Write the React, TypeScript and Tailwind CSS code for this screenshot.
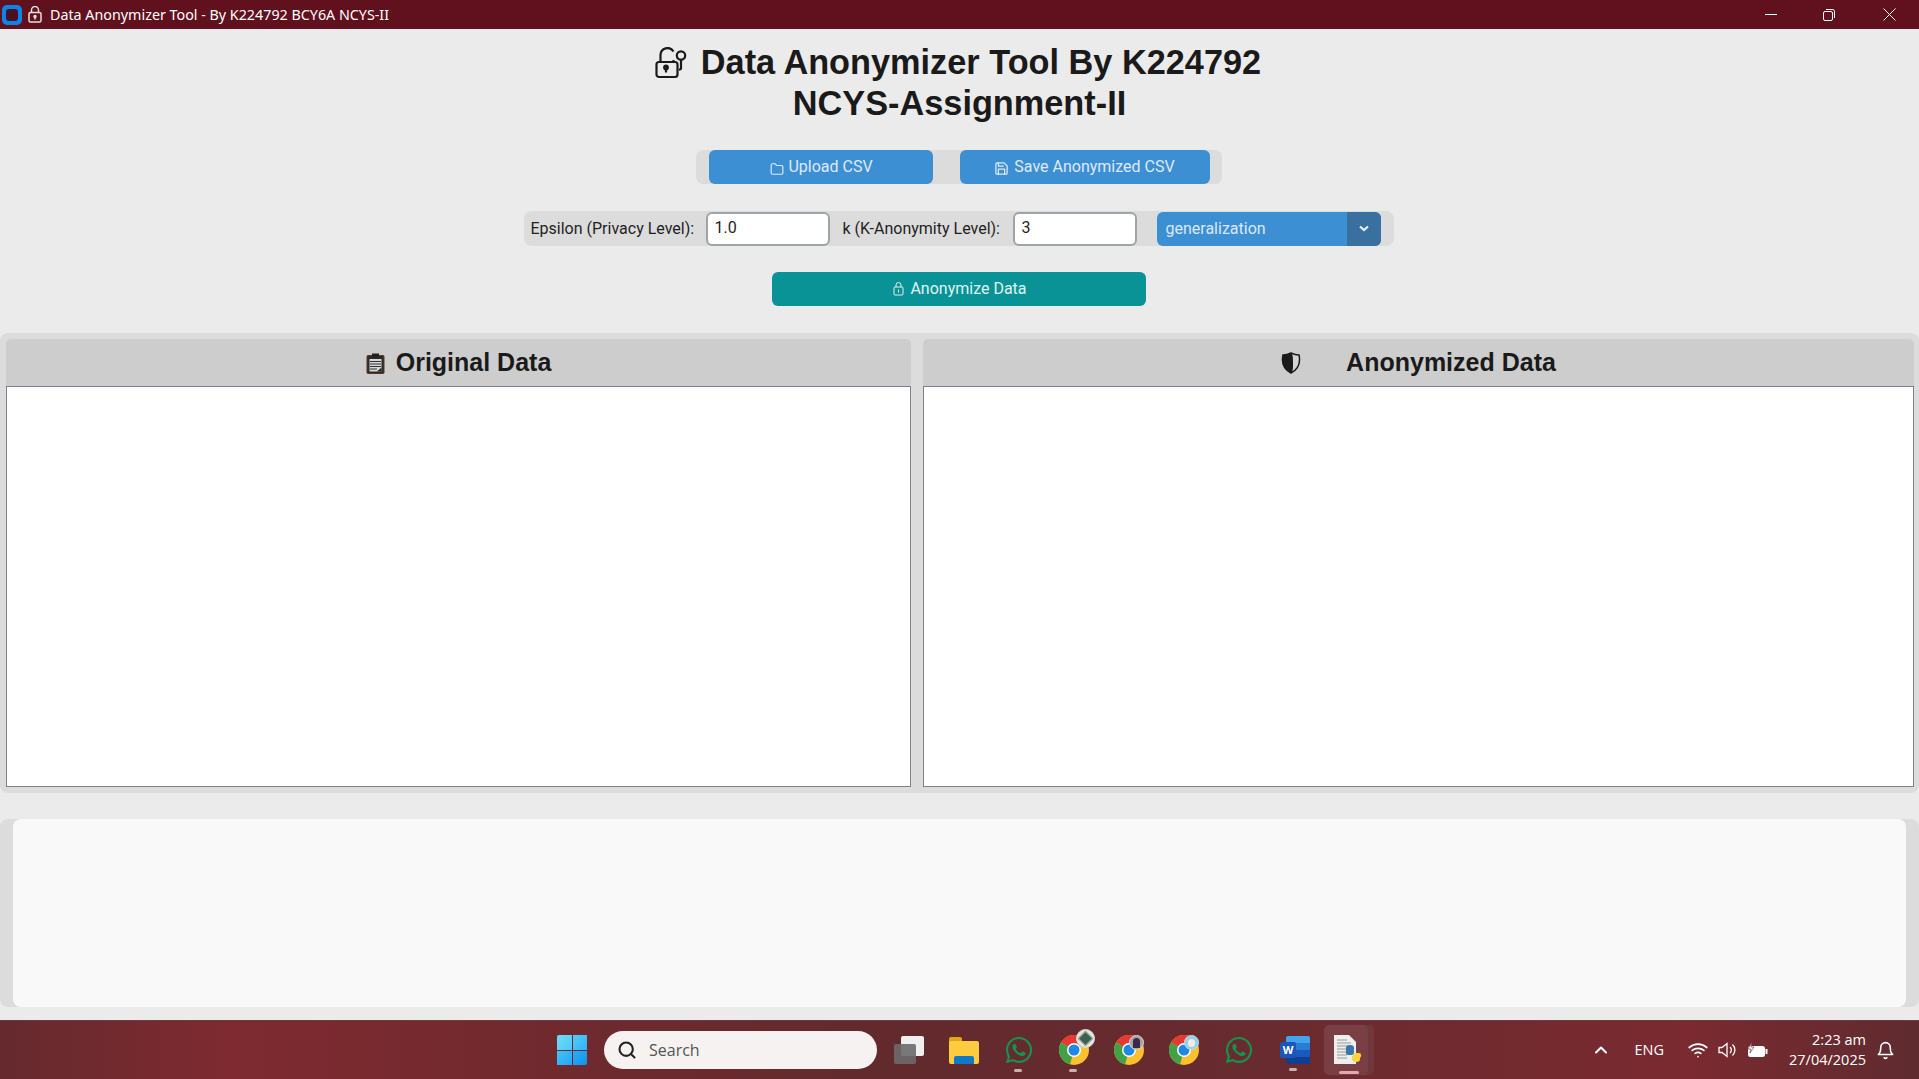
import React from "react";
import { FaWhatsapp } from "react-icons/fa";
import { FiBell, FiChevronUp, FiFolder, FiSave, FiSearch, FiWifi } from "react-icons/fi";

function AppIcon() {
  return (
    <div className="w-[20px] h-[20px] ml-[2px] rounded-[5px] bg-[#0a84e8] flex items-center justify-center">
      <div className="w-[12px] h-[12px] rounded-[3px] bg-[#4a1024]" />
    </div>
  );
}

function TitleLock() {
  return (
    <svg width="14" height="17" viewBox="0 0 14 17" fill="none" stroke="#e8dcdc" strokeWidth="1.5">
      <path d="M3.5 6.5V4a3.5 3.5 0 0 1 7 0v2.5" />
      <rect x="1" y="6.5" width="12" height="9.5" rx="1.5" />
      <circle cx="7" cy="10.5" r="1" fill="#e8dcdc" />
      <path d="M7 11v2.5" />
    </svg>
  );
}

function WindowButtons() {
  return (
    <div className="flex items-center h-full text-white">
      <div className="w-[56px] flex justify-center">
        <div className="w-[12px] h-[1px] bg-white" />
      </div>
      <div className="w-[60px] flex justify-center">
        <svg width="12" height="12" viewBox="0 0 12 12" fill="none" stroke="#fff" strokeWidth="1">
          <rect x="0.5" y="2.5" width="9" height="9" rx="1.5" />
          <path d="M3 0.5h6.5a2 2 0 0 1 2 2V9" />
        </svg>
      </div>
      <div className="w-[60px] flex justify-center">
        <svg width="13" height="13" viewBox="0 0 13 13" stroke="#fff" strokeWidth="1">
          <path d="M0.5 0.5l12 12M12.5 0.5l-12 12" />
        </svg>
      </div>
    </div>
  );
}

function LockKeyIcon() {
  return (
    <svg width="32" height="32" viewBox="0 0 32 32" fill="none" stroke="#1a1a1a" strokeWidth="2.2">
      <path d="M5.5 15V8a7 7 0 0 1 13-3.5" />
      <path d="M18.5 15v-2" />
      <rect x="1.5" y="15" width="21" height="15" rx="2.5" />
      <circle cx="11" cy="20.5" r="1.8" fill="#1a1a1a" />
      <path d="M11 21v4.5" />
      <circle cx="26" cy="8.5" r="4.2" />
      <path d="M26 12.7v9l-2 1.5" />
    </svg>
  );
}

function ClipboardIcon() {
  return (
    <svg width="19" height="21" viewBox="0 0 19 21">
      <rect x="1" y="2.5" width="17" height="18" rx="1" fill="#2b2b2b" stroke="#5a3a1a" />
      <rect x="6" y="0.5" width="7" height="4" fill="#222" />
      <rect x="3.5" y="6" width="12" height="12.5" fill="#d8d8d8" />
      <path d="M4 8.5h11M4 11h11M4 13.5h11M4 16h7" stroke="#333" strokeWidth="1" />
      <path d="M11 18.5l4.5-4v4z" fill="#222" />
    </svg>
  );
}

function ShieldIcon() {
  return (
    <svg width="20" height="22" viewBox="0 0 20 22">
      <path d="M10 1C7 2.5 5 3 2 3c-1.5 7 0 14 8 18 8-4 9.5-11 8-18-3 0-5-.5-8-2z" fill="#d4d4d4" stroke="#1a1a1a" strokeWidth="1.5" />
      <path d="M10 1C7 2.5 5 3 2 3c-1.5 7 0 14 8 18 2-1.5 2-4.5 2-10S12 2.5 10 1z" fill="#1a1a1a" />
    </svg>
  );
}

function SmallLock() {
  return (
    <svg width="11" height="14" viewBox="0 0 11 14" fill="none" stroke="#dff3f2" strokeWidth="1">
      <path d="M3 5V3a2.5 2.5 0 0 1 5 0v2" />
      <rect x="1" y="5" width="9" height="8" rx="1" />
      <path d="M5.5 7.5v3" />
    </svg>
  );
}

function Chrome({ badge, dot }: { badge: string; dot: string }) {
  return (
    <div className="relative w-[30px] h-[30px]">
      <svg width="30" height="30" viewBox="0 0 30 30">
        <circle cx="15" cy="15" r="15" fill="#fbc02d" />
        <path d="M15 15L2 7.5A15 15 0 0 1 28 7.5z" fill="#e53935" />
        <path d="M15 15L2 7.5A15 15 0 0 0 11 29.5z" fill="#43a047" />
        <circle cx="15" cy="15" r="7" fill="#fff" />
        <circle cx="15" cy="15" r="5.5" fill="#1e88e5" />
      </svg>
      <div className={`absolute rounded-full border border-[#d8d8d8] flex items-center justify-center ${badge}`}>
        <div className={dot} />
      </div>
    </div>
  );
}

function WordIcon() {
  return (
    <div className="relative w-[30px] h-[28px] flex flex-col ml-[1px]">
      <div className="ml-[6px] h-[7px] rounded-t-[2px] bg-[#41a5ee]" />
      <div className="ml-[6px] h-[7px] bg-[#2b7cd3]" />
      <div className="ml-[6px] h-[7px] bg-[#185abd]" />
      <div className="ml-[6px] h-[7px] rounded-b-[2px] bg-[#103f91]" />
      <div className="absolute left-0 top-[6px] w-[16px] h-[16px] rounded-[2px] bg-[#1a56b8] flex items-center justify-center text-white text-[11px] font-bold font-['Open_Sans',sans-serif]">
        W
      </div>
    </div>
  );
}

function PythonFileIcon() {
  return (
    <div className="relative w-[50px] h-[50px]">
      <div className="absolute right-0 top-0 w-[20px] h-full rounded-[5px] bg-[#6e383c]" />
      <div className="absolute left-0 top-0 w-[44px] h-full rounded-[5px] bg-[#7a3f44] flex items-center justify-center pl-[2px]">
        <svg width="30" height="32" viewBox="0 0 30 32">
          <path d="M2 1h15l7 7v22H2z" fill="#eeeeee" />
          <path d="M5 6h10M5 9h14M5 12h14M5 15h12M5 18h10M5 21h10M5 24h10" stroke="#9a9a9a" strokeWidth="1" />
          <path d="M14 20c0-3 1-4 4-4h4v-2c0-2-1-3-4-3s-4 1-4 3v2" fill="#3776ab" />
          <rect x="14" y="15" width="8" height="6" rx="2" fill="#3776ab" />
          <path d="M28 18c0 3-1 4-4 4h-4v3c0 2 1 3 4 3s4-1 4-3z" fill="#ffd43b" />
          <rect x="21" y="19" width="8" height="5" rx="2" fill="#ffd43b" />
        </svg>
        <div className="absolute bottom-[1px] left-[15px] w-[20px] h-[3px] rounded-full bg-[#e4a8ac]" />
      </div>
    </div>
  );
}

function Dot() {
  return <div className="absolute -bottom-[7px] left-[10px] w-[8px] h-[3px] rounded-full bg-[#c9b0b2]" />;
}

function Taskbar() {
  return (
    <div className="h-[59px] shrink-0 border-t border-[#6b3a3e] bg-[linear-gradient(90deg,#652a2e_0%,#7e2a30_12%,#622a2d_45%,#682b2f_65%,#7a2a30_88%,#5f2b2f_100%)] flex items-center justify-between pl-[557px] font-['Open_Sans',sans-serif]">
      <div className="flex items-center h-full">
        <div className="grid grid-cols-2 gap-[1px] w-[30px] h-[30px]">
          <div className="bg-gradient-to-br from-[#6fdcf9] to-[#4cc8f7] rounded-tl-[2px]" />
          <div className="bg-gradient-to-br from-[#52cdf8] to-[#2fb4f5]" />
          <div className="bg-gradient-to-br from-[#45c2f7] to-[#1fa6f2]" />
          <div className="bg-gradient-to-br from-[#2bb0f5] to-[#0f93ee] rounded-br-[2px]" />
        </div>
        <div className="ml-[17px] w-[273px] h-[38px] rounded-full bg-[#f5f2f1] flex items-center pl-[13px] text-[#555] text-[16px]">
          <FiSearch className="text-[#222] mr-[12px]" size={20} strokeWidth={2.5} />
          Search
        </div>
        <div className="ml-[17px] relative w-[30px] h-[28px]">
          <div className="absolute right-0 top-0 w-[23px] h-[20px] rounded-[2px] bg-[#efefef]" />
          <div className="absolute left-0 bottom-0 w-[22px] h-[20px] rounded-[2px] bg-[#6a6a6a]/90" />
        </div>
        <div className="ml-[25px] relative w-[30px] h-[27px]">
          <div className="absolute left-0 top-0 w-[13px] h-[6px] rounded-t-[2px] bg-[#e5a50f]" />
          <div className="absolute left-0 top-[4px] w-[30px] h-[23px] rounded-[2px] bg-[#fccb3e]" />
          <div className="absolute left-[5px] bottom-0 w-[20px] h-[8px] rounded-t-[2px] bg-[#0f78c9]" />
        </div>
        <div className="ml-[25px] relative w-[30px] h-[30px]">
          <FaWhatsapp size={30} className="text-[#16924f]" />
          <Dot />
        </div>
        <div className="ml-[25px] relative">
          <Chrome
            badge="w-[19px] h-[19px] -top-[6px] -right-[6px] bg-[#e6e6e6]"
            dot="w-[11px] h-[11px] rotate-45 bg-[#3f5f4f] border border-[#9ab0a2]"
          />
          <Dot />
        </div>
        <div className="ml-[25px]">
          <Chrome
            badge="w-[15px] h-[15px] top-0 right-0 bg-[#a8a0a8]"
            dot="w-[7px] h-[10px] rounded-t-full bg-[#3a2a4a]"
          />
        </div>
        <div className="ml-[25px]">
          <Chrome
            badge="w-[15px] h-[15px] top-0 right-0 bg-[#8fd2ea]"
            dot="w-[7px] h-[8px] rounded-full bg-[#f4ece8]"
          />
        </div>
        <div className="ml-[25px]">
          <FaWhatsapp size={30} className="text-[#16924f]" />
        </div>
        <div className="ml-[25px] relative">
          <WordIcon />
          <Dot />
        </div>
        <div className="ml-[14px]">
          <PythonFileIcon />
        </div>
      </div>
      <div className="h-full flex items-center text-white">
        <FiChevronUp size={20} strokeWidth={2.5} />
        <span className="ml-[23px] text-[14.5px]">ENG</span>
        <FiWifi size={20} className="ml-[24px]" />
        <svg width="20" height="18" viewBox="0 0 20 18" fill="none" stroke="#fff" strokeWidth="1.3" className="ml-[10px]">
          <path d="M1 6.5v5h3l5 4v-13l-5 4zM12 6a4 4 0 0 1 0 6M14.5 3.5a7.5 7.5 0 0 1 0 11" />
        </svg>
        <svg width="21" height="16" viewBox="0 0 21 16" className="ml-[9px]">
          <rect x="1" y="4" width="17" height="11" rx="2.5" fill="#fff" />
          <rect x="18.5" y="7" width="2" height="5" fill="#fff" />
          <path d="M5 0L1 7h3l-1 4 4-6H4z" fill="#fff" stroke="#70282e" strokeWidth="0.6" />
        </svg>
        <div className="ml-[20px] w-[78px] text-right text-[14.5px] leading-[20px] whitespace-nowrap">
          <div>2:23 am</div>
          <div>27/04/2025</div>
        </div>
        <FiBell size={19} className="ml-[10px] mr-[24px]" />
      </div>
    </div>
  );
}

function PanelHeader({ children }: { children: React.ReactNode }) {
  return (
    <div className="h-[47px] pt-[1px] rounded-t-[5px] bg-[#cdcdcd] flex items-center justify-center font-['Liberation_Sans',sans-serif] font-bold text-[25px] text-[#1a1a1a]">
      {children}
    </div>
  );
}

export default function App() {
  return (
    <div className="h-[1079px] w-full flex flex-col overflow-hidden bg-[#ebebeb] font-['Roboto',sans-serif]">
      {/* title bar */}
      <div className="h-[29px] shrink-0 bg-[#61101d] flex items-center justify-between">
        <div className="flex items-center">
          <AppIcon />
          <div className="ml-[6px] flex">
            <TitleLock />
          </div>
          <span className="ml-[8px] text-white text-[14.3px] font-['Noto_Sans',sans-serif]">
            Data Anonymizer Tool - By K224792 BCY6A NCYS-II
          </span>
        </div>
        <WindowButtons />
      </div>

      {/* heading */}
      <div className="pt-[13px] text-center font-['Liberation_Sans',sans-serif] font-bold text-[34.3px] leading-[41px] text-[#1a1a1a]">
        <div className="flex items-center justify-center gap-[14px] pr-[3px]">
          <LockKeyIcon />
          <span>Data Anonymizer Tool By K224792</span>
        </div>
        <div>NCYS-Assignment-II</div>
      </div>

      {/* file buttons */}
      <div className="mt-[26px] flex justify-center pr-[2px]">
        <div className="w-[526px] h-[34px] rounded-[7px] bg-[#dcdcdc] flex pl-[13px] text-[16px] text-[#dfeaf5]">
          <button className="w-[224px] h-[34px] rounded-[6px] bg-[#3d8fd4] flex items-center justify-center gap-[4px] pl-[2px]">
            <FiFolder size={14} className="mt-[3px]" />
            Upload CSV
          </button>
          <button className="ml-[27px] w-[250px] h-[34px] rounded-[6px] bg-[#3d8fd4] flex items-center justify-center gap-[5px]">
            <FiSave size={15} className="mt-[3px]" />
            Save Anonymized CSV
          </button>
        </div>
      </div>

      {/* options */}
      <div className="mt-[27px] flex justify-center pr-[2px]">
        <div className="w-[870px] h-[35px] rounded-[8px] bg-[#dcdcdc] flex items-center pl-[7px] text-[16px] text-[#1f1f1f]">
          <span className="w-[175px]">Epsilon (Privacy Level):</span>
          <div className="w-[124px] h-[34px] rounded-[6px] border-2 border-[#a0a4a8] bg-white flex items-center pl-[7px] pb-[2px]">
            1.0
          </div>
          <span className="ml-[13px] w-[170px]">k (K-Anonymity Level):</span>
          <div className="w-[124px] h-[34px] rounded-[6px] border-2 border-[#a0a4a8] bg-white flex items-center pl-[7px] pb-[2px]">
            3
          </div>
          <div className="ml-[20px] w-[224px] h-[34px] rounded-[6px] overflow-hidden bg-[#3d8fd4] flex text-[#dbe8f4]">
            <span className="flex-1 pl-[9px] flex items-center">generalization</span>
            <div className="w-[34px] bg-[#3a709f] flex items-center justify-center">
              <svg width="10" height="7" viewBox="0 0 10 7" fill="none" stroke="#e8f0f7" strokeWidth="2.2">
                <path d="M1 1.5l4 3.5 4-3.5" />
              </svg>
            </div>
          </div>
        </div>
      </div>

      <div className="mt-[26px] flex justify-center pr-[2px]">
        <button className="w-[374px] h-[34px] pl-[3px] rounded-[6px] bg-[#0a9396] text-[16px] text-[#dff3f2] flex items-center justify-center gap-[6px]">
          <SmallLock />
          Anonymize Data
        </button>
      </div>

      {/* data panels */}
      <div className="mt-[27px] h-[460px] shrink-0 rounded-[8px] bg-[#dcdcdc] pt-[6px] pb-[6px] pl-[6px] pr-[5px] flex gap-[12px]">
        <div className="w-[905px] flex flex-col">
          <PanelHeader>
            <span className="mr-[11px] flex">
              <ClipboardIcon />
            </span>
            Original Data
          </PanelHeader>
          <div className="flex-1 bg-white border border-[#80808c]" />
        </div>
        <div className="flex-1 flex flex-col">
          <PanelHeader>
            <span className="mr-[45px] flex">
              <ShieldIcon />
            </span>
            Anonymized Data
          </PanelHeader>
          <div className="flex-1 bg-white border border-[#80808c]" />
        </div>
      </div>

      {/* log area */}
      <div className="mt-[26px] flex-1 min-h-0 pb-[13px]">
        <div className="h-full rounded-[8px] bg-[#dcdcdc] px-[13px]">
          <div className="h-full rounded-[8px] bg-[#f9f9f9]" />
        </div>
      </div>

      <Taskbar />
    </div>
  );
}
